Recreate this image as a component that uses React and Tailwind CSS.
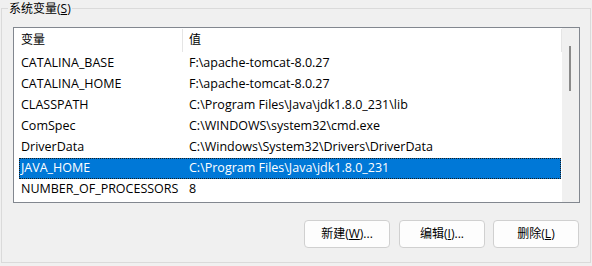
import React from "react";

const rows = [
  ["CATALINA_BASE", "F:\\apache-tomcat-8.0.27"],
  ["CATALINA_HOME", "F:\\apache-tomcat-8.0.27"],
  ["CLASSPATH", "C:\\Program Files\\Java\\jdk1.8.0_231\\lib"],
  ["ComSpec", "C:\\WINDOWS\\system32\\cmd.exe"],
  ["DriverData", "C:\\Windows\\System32\\Drivers\\DriverData"],
  ["JAVA_HOME", "C:\\Program Files\\Java\\jdk1.8.0_231"],
  ["NUMBER_OF_PROCESSORS", "8"],
];

const font = {
  fontFamily: '"Segoe UI", "Open Sans", "Noto Sans CJK SC", sans-serif',
};

function Button({ children }) {
  return (
    <div className="w-[86px] h-[28px] rounded-[4px] border border-[#d0d0d0] bg-[#fdfdfd] flex items-center justify-center text-[12px] text-black">
      {children}
    </div>
  );
}

export default function App() {
  return (
    <div
      className="w-[592px] h-[266px] bg-[#f0f0f0] pt-[8px] pl-[1px] overflow-hidden text-black"
      style={font}
    >
      <div className="relative w-[590px] h-[255px] border border-[#dadada]">
        <div className="absolute left-[6px] -top-[8px] bg-[#f0f0f0] px-[1px] text-[12px] leading-[15px]">
          系统变量(<span className="underline">S</span>)
        </div>
        <div className="ml-[11px] mt-[18px] w-[567px] h-[176px] border border-[#82878f] bg-white flex">
          <div className="flex-1 flex flex-col pl-[5px]">
            <div className="h-[25px] flex items-stretch text-[12px]">
              <div className="w-[168px] flex items-center pl-[2px] pb-[1px]">变量</div>
              <div className="w-[1px] bg-[#e5e5e5] my-[1px] -ml-[5px] mr-[5px]"></div>
              <div className="flex-1 flex items-center pl-[1px] pb-[1px]">值</div>
              <div className="w-[1px] bg-[#e5e5e5] my-[1px]"></div>
            </div>
            {rows.map(([k, v]) => {
              const sel = k === "JAVA_HOME";
              return (
                <div
                  key={k}
                  className={
                    "h-[21px] w-[542px] flex items-center text-[12.5px] " +
                    (sel
                      ? "bg-[#0078d7] text-white outline-1 outline-dotted outline-[#1a1a1a] -outline-offset-1"
                      : "")
                  }
                >
                  <div className="w-[168px] pl-[2px] whitespace-nowrap">{k}</div>
                  <div className="flex-1 pl-[2px] whitespace-nowrap">{v}</div>
                </div>
              );
            })}
          </div>
          <div className="w-[17px] bg-[#f0f0f0] pt-[18px] pl-[7px]">
            <div className="w-[2px] h-[45px] bg-[#8a8a8a]"></div>
          </div>
        </div>
        <div className="flex mt-[17px] ml-[302px]">
          <Button>
            新建(<span className="underline">W</span>)...
          </Button>
          <div className="w-[9px]"></div>
          <Button>
            编辑(<span className="underline">I</span>)...
          </Button>
          <div className="w-[8px]"></div>
          <Button>
            删除(<span className="underline">L</span>)
          </Button>
        </div>
      </div>
    </div>
  );
}
